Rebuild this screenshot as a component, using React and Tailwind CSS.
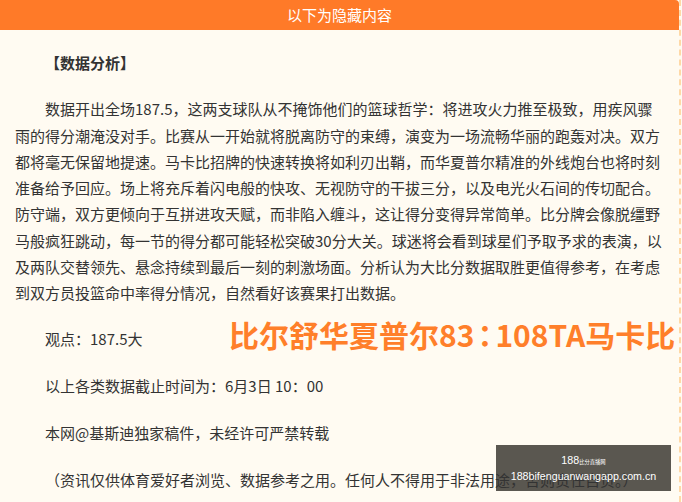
import React from "react";

const bodyText =
  "数据开出全场187.5，这两支球队从不掩饰他们的篮球哲学：将进攻火力推至极致，用疾风骤雨的得分潮淹没对手。比赛从一开始就将脱离防守的束缚，演变为一场流畅华丽的跑轰对决。双方都将毫无保留地提速。马卡比招牌的快速转换将如利刃出鞘，而华夏普尔精准的外线炮台也将时刻准备给予回应。场上将充斥着闪电般的快攻、无视防守的干拔三分，以及电光火石间的传切配合。防守端，双方更倾向于互拼进攻天赋，而非陷入缠斗，这让得分变得异常简单。比分牌会像脱缰野马般疯狂跳动，每一节的得分都可能轻松突破30分大关。球迷将会看到球星们予取予求的表演，以及两队交替领先、悬念持续到最后一刻的刺激场面。分析认为大比分数据取胜更值得参考，在考虑到双方员投篮命中率得分情况，自然看好该赛果打出数据。";

const App = () => {
  return (
    <div className="relative h-[502px] w-[682px] overflow-hidden bg-[#fffbf2] font-['Noto_Sans_CJK_SC','Liberation_Sans',sans-serif]">
      <div className="h-full w-[681px] border-r-2 border-dashed border-[#ffd9a6]">
        <div className="flex h-[30px] items-center justify-center rounded-tr-[4px] bg-[#ff7a28] text-[15px] text-white">
          以下为隐藏内容
        </div>
        <div className="relative z-10 px-[15px] pt-[20px] text-[15px] leading-[26.25px] text-[#333333]">
          <p className="mb-[20px] indent-[30px] font-bold">【数据分析】</p>
          <p className="mb-[20px] indent-[30px]">{bodyText}</p>
          <p className="mb-[20.5px] indent-[30px]">观点：187.5大</p>
          <p className="mb-[20.5px] indent-[30px]">以上各类数据截止时间为：6月3日 10：00</p>
          <p className="mb-[20.5px] indent-[30px]">本网@基斯迪独家稿件，未经许可严禁转载</p>
          <p className="mb-[20px] indent-[30px] whitespace-nowrap">（资讯仅供体育爱好者浏览、数据参考之用。任何人不得用于非法用途，否则责任自负。）</p>
        </div>
      </div>
      <div className="absolute left-[229px] top-[313px] z-10 whitespace-nowrap text-[30px] font-bold leading-[42px] text-[#ff7f2a]">
        比尔舒华夏普尔83<span className="-mx-[4.5px] font-['Noto_Sans_CJK_TC',sans-serif]">：</span>108TA马卡比
      </div>
      <div className="absolute left-[496px] top-[445px] flex h-[46px] w-[175px] flex-col items-center justify-center bg-[#5a5750] font-['Liberation_Sans',sans-serif] text-[10.7px] leading-[14px] text-white">
        <span className="relative z-20">
          188<span className="font-['Noto_Sans_CJK_SC',sans-serif] text-[5.3px]">比分直播网</span>
        </span>
        <span className="relative z-20">188bifenguanwangapp.com.cn</span>
      </div>
    </div>
  );
};

export default App;
